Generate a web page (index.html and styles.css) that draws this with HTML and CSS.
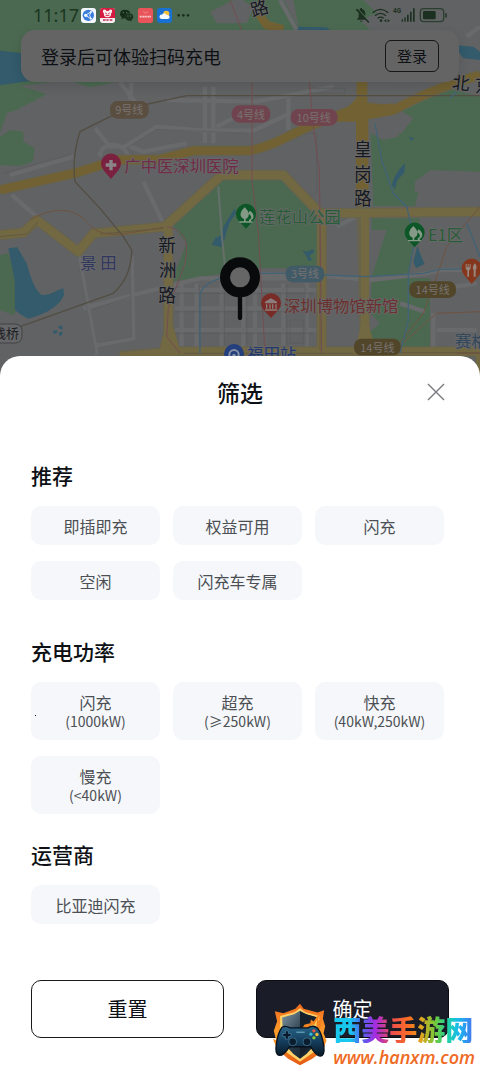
FILE: index.html
```html
<!DOCTYPE html>
<html lang="zh-CN">
<head>
<meta charset="utf-8">
<meta name="viewport" content="width=device-width, initial-scale=1">
<title>筛选</title>
<link rel="stylesheet" href="styles.css">
</head>
<body>
<main class="app">
  <section class="stage">
    <svg class="map" viewBox="0 0 1440 1128" preserveAspectRatio="xMidYMin slice" role="img" aria-label="地图">
      <rect class="ground" width="1440" height="1128"/>
      <g class="green">
        <path d="M0 0H560L640 60L650 130L380 240L270 262L200 240L60 258L140 282L50 330L20 340L0 400Z"/>
        <path d="M650 0H850L900 90H600L540 40L560 0Z"/>
        <path d="M880 0H1090L1130 40L1080 60L1120 100H900Z"/>
        <path d="M0 410L30 390L70 395V425L104 445L98 485L60 498L0 495Z"/>
        <path d="M665 530H845L952 635V805H780L640 825L510 845L540 780L560 730L520 680L570 620Z"/>
        <path d="M1205 300L1340 265L1440 290V515L1290 510L1245 545V575H1255L1245 618H1120L1112 400L1150 420L1205 400L1240 355L1190 325Z"/>
        <path d="M1115 655H1260L1225 830H1115L1160 690H1115Z"/>
        <path d="M1115 835H1290V1040L1200 1060L1120 1040L1105 1000L1140 970L1112 940Z"/>
        <path d="M0 765L25 760L45 820L50 930L40 945L0 930Z"/>
      </g>
      <g class="ground">
        <path d="M630 35L700 0H730L760 25L740 70H650ZM1175 260L1280 265L1260 300L1185 310ZM1140 358H1205L1195 410L1150 420Z"/>
      </g>
      <g class="water">
        <path d="M0 152L70 160L110 190V240L0 256Z"/>
        <path d="M25 745L52 742L80 790C92 830 100 865 125 885C150 888 170 870 190 865L192 885C180 915 145 940 85 956L60 942L45 930L44 840Z"/>
        <path d="M635 735L645 715L665 705L670 680L688 650L705 625L708 640L690 665L678 700L668 742Z"/>
        <path d="M907 750L920 755L940 748L942 756L928 768L937 780L925 783L920 770Z"/>
        <path d="M1175 555L1182 535L1198 508L1215 490L1213 518L1192 540L1185 568Z"/>
        <path d="M1252 738L1262 765L1274 792L1248 804L1240 785Z"/>
        <path d="M158 994L170 990L172 998L162 1002ZM174 980L186 976L188 988L178 986ZM176 998L188 994L186 1006L178 1008Z"/>
        <path d="M890 80L980 82L992 92H880ZM1360 135L1420 140L1440 155V180L1390 175ZM1225 410L1242 414L1235 423Z"/>
      </g>
      <g class="street">
        <path d="M360 248L405 305M395 248L390 300M285 385L330 440L375 440L470 380L610 392H760L860 345M300 470C300 425 370 420 385 470M380 435L430 455L560 430M30 525L220 470M35 585L110 650M430 545L490 670M615 260V430M640 260V430M500 300L770 305L1000 260M865 295V390M650 380L770 320"/>
        <path d="M235 760L290 1066M395 770L400 1020M290 1035L400 1015M250 925L400 885L600 835H860M520 870H950M525 925H950M525 990H950M545 850V1040M590 850V1040M665 850V1040M730 850V1040M765 850V1040M850 850V1040M920 850V1040M1010 680L1070 650M1200 910L1275 935M1300 870L1430 850M1310 990H1430M1300 940V1060M780 822L1000 830L1110 840L1270 822L1330 810L1440 810M1440 80L1400 110M840 0L890 90"/>
      </g>
      <path class="path" d="M655 560L665 700L675 800"/>
      <g class="edge">
        <path d="M230 760L285 1060M390 770L394 1010M275 930L390 890M295 1028L395 1010M525 880H940M525 935H940M525 1000H940M598 855V1035M673 855V1035M740 855V1035M860 855V1035M915 855V1035M380 445L470 388L740 400M865 425L925 400L950 400V575Q945 590 920 580L860 530M10 520L215 462M870 960H910V1030H870ZM925 265H1035V280H925"/>
      </g>
      <g class="road-casing">
        <path d="M0 570L230 518L350 480L480 478L580 452H750C850 430 900 380 1000 352L1080 320L1180 330C1240 300 1290 270 1440 225"/>
        <path d="M0 705L70 698L110 660L235 755L280 700L495 680L665 525H850L960 640L1440 635M1085 240V620L1095 1060M965 640V1060M505 700V1000L490 1066M360 1066L530 1055L1440 1055"/>
      </g>
      <g class="road">
        <path d="M0 570L230 518L350 480L480 478L580 452H750C850 430 900 380 1000 352L1080 320L1180 330C1240 300 1290 270 1440 225"/>
        <path d="M775 40L800 75L850 88"/>
        <path d="M1000 365L1070 295V240H1102V320L1180 310V345L1105 358V620H1068V365Z" class="road-fill"/>
      </g>
      <g class="road-b">
        <path d="M0 705L70 698L110 660L235 755L280 700L495 680L665 525H850L960 640L1440 635M1095 640V1060M965 640V1060M505 680V1000M360 1070L530 1054L1440 1054V1128"/>
        <path d="M497 980L480 1045V1066H545L520 980ZM1085 960L1065 1060H1130L1105 970Z" class="road-b-fill"/>
      </g>
      <g class="median"><path d="M0 710L80 702L115 665M300 702L490 685M960 660V1050M1110 1058H1440M550 1060H1060"/></g>
      <g class="line-brown"><path d="M1440 287H560L430 315L330 350L240 395Q215 470 225 545L300 625L370 710L395 750Q395 830 340 880L60 980"/></g>
      <g class="line-pink"><path d="M756 245V540L775 700L795 1060M928 245L940 380L958 510L965 1060M500 680C560 690 565 730 555 790L505 925L500 1010L540 1060M690 0L725 90"/></g>
      <g class="line-orange"><path d="M90 660C160 620 220 620 265 670C290 700 320 705 370 702L490 682M1440 620L1340 740L1310 830L1270 940L1190 1040M1190 1045L1310 940L1440 935M1370 1060H1440"/></g>
      <g class="line-blue"><path d="M600 1060V890Q600 855 660 835M780 820H860M970 825L1100 830L1270 820L1320 808L1440 805M1125 370L1145 480L1180 580L1220 620L1245 720L1225 820V960L1200 1060M1400 670L1440 770M1350 295L1370 275"/></g>

      <g class="badge">
        <rect class="brown" x="330" y="303" width="116" height="53" rx="22"/><text x="388" y="343">9号线</text>
        <rect class="pink" x="695" y="316" width="116" height="52" rx="24"/><text x="753" y="356">4号线</text>
        <rect class="pink" x="872" y="327" width="141" height="50" rx="24"/><text x="941" y="366">10号线</text>
        <rect class="blue" x="857" y="797" width="116" height="50" rx="22"/><text x="915" y="835">3号线</text>
        <rect class="olive" x="1228" y="844" width="140" height="50" rx="22"/><text x="1298" y="882">14号线</text>
        <rect class="olive" x="1062" y="1016" width="140" height="50" rx="22"/><text x="1132" y="1055">14号线</text>
      </g>

      <g class="place">
        <g class="dark">
          <text x="752" y="45" transform="rotate(-16 777 25)">路</text>
          <text x="1062" y="468">皇</text><text x="1062" y="542">岗</text><text x="1062" y="616">路</text>
          <text x="475" y="756">新</text><text x="477" y="830">洲</text><text x="475" y="906">路</text>
          <text x="1356" y="268" transform="rotate(6 1380 250)">北</text><text x="1425" y="276">京</text>
        </g>
        <text class="indigo" x="241" y="806">景 田</text>
        <text class="rose" x="373" y="517">广中医深圳医院</text>
        <text class="leaf" x="777" y="668">莲花山公园</text>
        <text class="leaf" x="1284" y="724">E1区</text>
        <text class="brick" x="852" y="936">深圳博物馆新馆</text>
        <text class="station" x="742" y="1080">福田站</text>
        <text class="steel" x="1365" y="1042">赛格</text>
      </g>
      <rect class="tag" x="-60" y="972" width="126" height="57" rx="20"/>
      <text class="tag-text" x="-21" y="1015">栈桥</text>

      <g>
        <path fill="#7b2140" d="M333 537L312 512A30 30 0 1 1 354 512Z"/>
        <path fill="#8b8488" d="M328 480h10v10h11v10h-11v11h-10v-11h-11v-10h11z"/>
        <path fill="#0d5628" d="M738 686L716 662A30 30 0 1 1 760 662ZM1244 742L1222 718A30 30 0 1 1 1266 718Z"/>
        <g fill="#849a87">
          <path d="M734 622C748 635 752 650 737 657V664H757V668H718V664H732V657C716 650 720 635 734 622ZM749 632C764 640 764 656 753 660V664H747V659C758 655 754 645 745 641Z"/>
          <path d="M1240 678C1254 691 1258 706 1243 713V720H1263V724H1224V720H1238V713C1222 706 1226 691 1240 678ZM1255 688C1270 696 1270 712 1259 716V720H1253V715C1264 711 1260 701 1251 697Z"/>
        </g>
        <path fill="#792c27" d="M813 954L791 930A30 30 0 1 1 835 930Z"/>
        <path fill="#8b7d7b" d="M813 895L831 905V910H795V905ZM798 913H802V926H798ZM808 913H812V926H808ZM816 913H820V926H816ZM826 913H830V926H826ZM795 928H832V932H795Z"/>
        <path fill="#85371d" d="M1415 852L1393 826A30 30 0 1 1 1437 826Z"/>
        <path fill="#96877f" d="M1397 792H1400V802H1403V792H1406V802H1409V792H1412V804Q1412 810 1407 811V830H1402V811Q1397 810 1397 804ZM1424 790Q1434 798 1427 811V830H1421V811Q1415 802 1424 790Z"/>
        <circle cx="702" cy="1062" r="30" fill="#243f7d"/>
        <circle cx="702" cy="1064" r="14" fill="none" stroke="#8790a4" stroke-width="6"/>
        <circle cx="702" cy="1066" r="5" fill="#8790a4"/>
      </g>
      <g class="pin">
        <circle cx="720" cy="832" r="45"/>
        <path d="M720 885V954"/>
      </g>
    </svg>

    <header class="status">
      <div class="status-left">
        <time>11:17</time>
        <svg class="app-icon" viewBox="0 0 45 45"><rect width="45" height="45" rx="9" fill="#f4f7fd"/><circle cx="22" cy="22" r="17" fill="#3b7ddc"/><path d="M30 11L14 22L30 33M30 11Q22 22 30 33" fill="none" stroke="#e4efff" stroke-width="3"/><g fill="#eef5ff"><circle cx="14" cy="22" r="5"/><circle cx="30" cy="12" r="3"/><circle cx="30" cy="32" r="3"/></g></svg>
        <svg class="app-icon" viewBox="0 0 45 45"><rect width="45" height="45" rx="8" fill="#f8eef1"/><path d="M8 0H37Q45 0 45 8V30H0V8Q0 0 8 0Z" fill="#d51c40"/><path d="M9 6Q15 2 19 8Q22 10 26 8Q31 2 36 6Q38 14 33 17Q35 27 22 28Q10 27 12 17Q7 14 9 6Z" fill="#faeaed"/><path d="M16 15l4 2M29 15l-4 2M17 22h11" stroke="#cf203f" stroke-width="3"/><path d="M9 36h8M19 36h7M29 36h8" stroke="#bf3154" stroke-width="5"/></svg>
        <svg class="app-icon" viewBox="0 0 45 45"><path d="M18 5C8 5 3 11 3 18C3 23 6 26 9 28L7 34L14 31L20 31C17 20 25 13 34 14C32 8 26 5 18 5Z" fill="#152c19"/><path d="M31 16C22 16 18 22 18 27C18 34 25 38 31 38L38 40L37 36C41 34 43 30 43 27C43 20 37 16 31 16Z" fill="#1a331e"/><g fill="#537158"><circle cx="13" cy="14" r="2"/><circle cx="23" cy="14" r="2"/><circle cx="27" cy="24" r="2"/><circle cx="35" cy="24" r="2"/></g></svg>
        <svg class="app-icon" viewBox="0 0 45 45"><rect width="45" height="45" rx="7" fill="#e9545a"/><path d="M15 10Q22 20 30 10" fill="none" stroke="#f7a7a8" stroke-width="2"/><path d="M5 26H40" stroke="#f8c7c7" stroke-width="5" stroke-dasharray="4 1"/></svg>
        <svg class="app-icon" viewBox="0 0 45 45"><rect width="45" height="45" rx="9" fill="#1871d2"/><circle cx="28" cy="17" r="9" fill="#f4bd38"/><path d="M13 33Q6 31 8 24Q10 19 15 20Q22 11 29 21Q37 20 38 27Q38 33 32 33Z" fill="#f3f8fe"/></svg>
        <svg class="app-icon" viewBox="0 0 45 45"><g fill="#1b2c20"><circle cx="8" cy="22" r="4"/><circle cx="22" cy="22" r="4"/><circle cx="36" cy="22" r="4"/></g></svg>
      </div>
      <svg class="signals" viewBox="0 0 282 48" role="img" aria-label="静音 4G 电量">
        <g fill="#1b3020">
          <path d="M10 5L46 45L43 48L5 8ZM18 6L20 3H24V6Q34 9 34 20V27L16 9ZM8 38L14 31V18L34 38ZM18 41H26Q22 48 18 41Z"/>
          <circle cx="81" cy="41" r="4"/><path d="M97 36V46L90 41ZM101 36V46L108 41Z"/>
          <path d="M143 37H147V44H143ZM151 31H155V44H151ZM159 23H164V44H159ZM168 14H173V44H168ZM177 4H182V44H177Z"/>
          <rect x="207" y="12" width="38" height="25" rx="4"/><rect x="274" y="18" width="4" height="14" rx="2"/>
        </g>
        <g fill="none" stroke="#1b3020" stroke-width="4"><path d="M56 17Q79 -3 103 17M63 26Q79 12 96 26M71 34Q80 27 89 34"/><rect x="199" y="5" width="70" height="39" rx="10" stroke="#2b3f30"/></g>
        <text x="117" y="19">4G</text>
      </svg>
    </header>

    <div class="login-card">
      <p>登录后可体验扫码充电</p>
      <button type="button" class="login-btn">登录</button>
    </div>
  </section>

  <section class="sheet" role="dialog" aria-labelledby="sheet-title">
    <header class="sheet-head">
      <h1 id="sheet-title">筛选</h1>
      <button type="button" class="close" aria-label="关闭">
        <svg viewBox="0 0 18 18"><path d="M1 1L17 17M17 1L1 17"/></svg>
      </button>
    </header>

    <div class="filters">
      <section class="group">
        <h2>推荐</h2>
        <div class="chips">
          <button type="button" class="chip">即插即充</button>
          <button type="button" class="chip">权益可用</button>
          <button type="button" class="chip">闪充</button>
          <button type="button" class="chip">空闲</button>
          <button type="button" class="chip">闪充车专属</button>
        </div>
      </section>
      <section class="group group-power">
        <h2>充电功率</h2>
        <div class="chips">
          <button type="button" class="chip chip-tall chip-dot"><span>闪充</span><small>(1000kW)</small></button>
          <button type="button" class="chip chip-tall"><span>超充</span><small>(≥250kW)</small></button>
          <button type="button" class="chip chip-tall"><span>快充</span><small>(40kW,250kW)</small></button>
          <button type="button" class="chip chip-tall"><span>慢充</span><small>(&lt;40kW)</small></button>
        </div>
      </section>
      <section class="group">
        <h2>运营商</h2>
        <div class="chips">
          <button type="button" class="chip">比亚迪闪充</button>
        </div>
      </section>
    </div>

    <footer class="actions">
      <button type="button" class="action">重置</button>
      <button type="button" class="action action-primary">确定</button>
    </footer>

    <aside class="watermark">
      <svg viewBox="0 0 165 190" aria-hidden="true">
        <defs>
          <linearGradient id="fire" x1="0" y1="0" x2="0" y2="1"><stop offset="0" stop-color="#f06a1d"/><stop offset=".5" stop-color="#ffa02c"/><stop offset="1" stop-color="#e45812"/></linearGradient>
          <linearGradient id="steel" x1="0" y1="0" x2="1" y2="1"><stop offset="0" stop-color="#8298a5"/><stop offset=".5" stop-color="#273947"/><stop offset="1" stop-color="#101a27"/></linearGradient>
          <linearGradient id="pad" x1="0" y1="0" x2="0" y2="1"><stop offset="0" stop-color="#286487"/><stop offset=".5" stop-color="#153e5d"/><stop offset="1" stop-color="#071827"/></linearGradient>
        </defs>
        <path fill="url(#fire)" d="M84 2L95 17L137 29L157 22L153 47L160 70L155 91L164 112L153 145L120 169L84 188L48 168L16 140L2 108L12 112L5 84L15 55L8 25L34 31L70 17Z"/>
        <path fill="#ffd36a" d="M84 16L101 28L142 39L143 100L130 145L84 177L38 145L24 98V39L67 28Z"/>
        <path fill="url(#steel)" d="M84 23L103 34L137 44L135 100Q125 143 84 168Q42 143 33 100L30 44L66 34Z"/>
        <path fill="#17212c" d="M84 25L103 34L137 44L134 100L84 168Z"/>
        <path fill="#f48320" d="M84 86L98 65L115 61L117 50L125 56L142 31L139 54L151 46L145 77L130 91Z"/>
        <path fill="#ffd05b" d="M108 80L118 66L128 65L135 50L134 70L128 88Z"/>
        <path fill="url(#pad)" stroke="#06111d" stroke-width="4" d="M29 74Q39 67 54 75H108Q124 65 137 76Q150 91 156 130Q159 160 145 160Q134 160 116 132H52Q34 160 21 158Q7 155 13 122Q17 90 29 74Z"/>
        <g fill="#0a1e30" stroke="#5288a4" stroke-width="2"><circle cx="62" cy="117" r="12"/><circle cx="105" cy="117" r="12"/></g>
        <path fill="#09192a" stroke="#4e87a8" stroke-width="2" d="M40 84h9v8h8v9h-8v8h-9v-8h-8v-9h8z"/>
        <circle cx="126" cy="84" r="5" fill="#ef573e"/><circle cx="117" cy="94" r="5" fill="#35b6d9"/><circle cx="135" cy="95" r="5" fill="#f7bd37"/><circle cx="126" cy="105" r="5" fill="#8bcc3b"/>
        <path d="M73 88H98" stroke="#78b9cc" stroke-width="3"/>
      </svg>
      <div class="watermark-text">
        <strong>西美手游网</strong>
        <span>www.hanxm.com</span>
      </div>
    </aside>
  </section>
</main>
</body>
</html>
```
FILE: styles.css
```css
* { box-sizing: border-box; }
body { margin: 0; background: #fff; color: #0d1014; font-family: "Noto Sans", "Noto Sans CJK SC", sans-serif; }
h1, h2, p { margin: 0; font-weight: 500; font-family: "Noto Sans CJK SC", sans-serif; }
button { margin: 0; padding: 0; border: 0; background: none; color: inherit; font: inherit; font-family: "Noto Sans CJK SC", sans-serif; cursor: pointer; }
.app { display: flex; flex-direction: column; min-height: 100vh; }

.stage { position: relative; min-height: 376px; overflow: hidden; }
.map { position: absolute; inset: 0; width: 100%; height: 100%; font-family: "Noto Sans CJK SC", sans-serif; }
.ground { fill: #616263; }
.green { fill: #4b6950; }
.water { fill: #335b6c; }
.street { fill: none; stroke: #696a6c; stroke-width: 13; }
.path { fill: none; stroke: #66706a; stroke-width: 6; }
.edge { fill: none; stroke: #595a5c; stroke-width: 2; }
.road-casing { fill: none; stroke: #67634f; stroke-width: 31; stroke-linejoin: round; }
.road { fill: none; stroke: #716133; stroke-width: 25; stroke-linejoin: round; }
.road-fill { fill: #716133; stroke: none; }
.road-b { fill: none; stroke: #726842; stroke-width: 25; stroke-linejoin: round; }
.road-b-fill { fill: #726842; stroke: none; }
.median { fill: none; stroke: #625a40; stroke-width: 3; }
.line-brown { fill: none; stroke: #534e43; stroke-width: 4; stroke-linejoin: round; }
.line-pink { fill: none; stroke: #744d53; stroke-width: 3; }
.line-orange { fill: none; stroke: #705340; stroke-width: 3; }
.line-blue { fill: none; stroke: #426376; stroke-width: 4; }
.badge { font-size: 33px; font-weight: 400; text-anchor: middle; fill: #787270; }
.brown { fill: #5a4e40; }
.pink { fill: #70444e; }
.blue { fill: #405a68; }
.olive { fill: #51462a; }
.place { font-size: 49px; font-weight: 400; paint-order: stroke; stroke: #68696b; stroke-width: 5px; stroke-linejoin: round; }
.dark { fill: #17191f; font-size: 53px; }
.indigo { fill: #31365e; }
.rose { fill: #702b45; }
.leaf { fill: #285c36; }
.brick { fill: #6c2f2d; }
.station { fill: #22386c; }
.steel { fill: #32475b; }
.tag { fill: #666768; stroke: #424245; stroke-width: 3; }
.tag-text { fill: #202126; font-size: 39px; }
.pin circle { fill: #666; stroke: #090a0b; stroke-width: 30; }
.pin path { stroke: #090a0b; stroke-width: 13; stroke-linecap: round; }

.status { position: relative; display: flex; justify-content: space-between; align-items: center; height: 30px; padding: 0 32px 0 33px; }
.status-left { display: flex; align-items: center; gap: 4px; }
.status time { width: 44px; color: #1b3520; font-size: 18px; line-height: 30px; }
.app-icon { width: 15px; height: 15px; }
.signals { width: 94px; height: 16px; }
.signals text { font: 700 19px Roboto, sans-serif; fill: #1b3020; }
.login-card { position: relative; display: flex; align-items: center; justify-content: space-between; min-height: 52px; margin: 0 21px; padding: 10px 20px; border-radius: 14px; background: #646464; box-shadow: 0 4px 12px rgba(0, 0, 0, .12); }
.login-card p { font-size: 18px; line-height: 28px; font-weight: 400; }
.login-btn { width: 54px; height: 32px; border: 1px solid #15171a; border-radius: 6px; font-size: 15px; line-height: 28px; }

.sheet { position: relative; flex: 1; display: flex; flex-direction: column; margin-top: -20px; padding: 18px 31px 29px; border-radius: 20px 20px 0 0; background: #fff; }
.sheet-head { display: grid; grid-template-columns: 18px 1fr 18px; align-items: center; }
.sheet-head h1 { grid-column: 2; font-size: 23px; line-height: 36px; text-align: center; }
.close { width: 18px; height: 36px; margin-left: -4px; }
.close svg { display: block; width: 18px; height: 18px; }
.close path { stroke: #77797c; stroke-width: 1.4; }
.filters { padding: 51px 5px 56px 0; }
.group h2 { margin-bottom: 17px; font-size: 21px; line-height: 28px; }
.group + .group { margin-top: 26px; }
.group + .group-power { margin-top: 37px; }
.chips { display: grid; grid-template-columns: repeat(3, 1fr); gap: 16px 13px; }
.chip { position: relative; display: flex; flex-direction: column; align-items: center; justify-content: center; min-height: 39px; border-radius: 10px; background: #f5f7fa; color: #4c4f54; font-size: 16px; line-height: 20px; }
.chip-tall { min-height: 58px; }
.chip small { font-family: "Noto Sans CJK SC", sans-serif; font-size: 14px; line-height: 18px; }
.chip-dot::before { content: ""; position: absolute; left: 4px; top: 33px; width: 1px; height: 1px; background: #111; }
.actions { display: grid; grid-template-columns: 1fr 1fr; gap: 32px; margin-top: auto; }
.action { height: 58px; border: 1px solid #17191d; border-radius: 10px; font-size: 20px; line-height: 28px; color: #0d1014; }
.action-primary { background: #1a1d27; border-color: #0b0d12; color: #fff; }
.watermark { position: absolute; right: 5px; bottom: 0; display: flex; align-items: flex-start; gap: 6px; pointer-events: none; }
.watermark svg { width: 55px; height: 63px; }
.watermark-text { display: flex; flex-direction: column; gap: 4px; padding-top: 12px; }
.watermark strong { font: 900 28px/28px "Noto Sans CJK SC", sans-serif; color: transparent; background: linear-gradient(90deg, #19c8ee 0 12%, #4c67f2 20%, #a62be0 30%, #ef4f4b 42%, #f97022 54%, #e1a51d 62%, #74c93a 72%, #20d59b 80%, #18bbed 88%, #4a6df0 100%); -webkit-background-clip: text; background-clip: text; }
.watermark span { font: italic 600 18px/20px "Open Sans", sans-serif; color: #ef6a24; }
```
